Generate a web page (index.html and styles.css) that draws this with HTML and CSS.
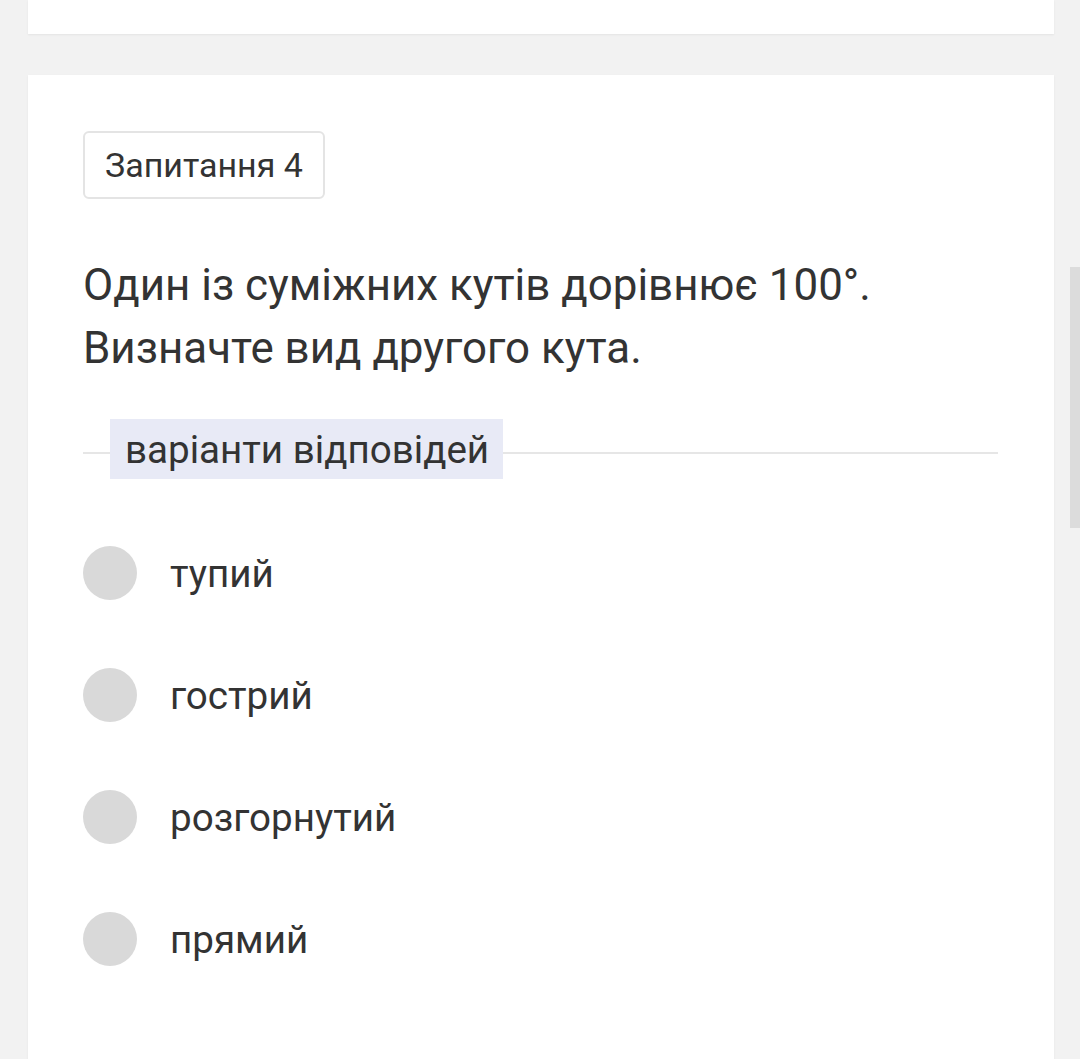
FILE: index.html
```html
<!DOCTYPE html>
<html lang="uk">
<head>
<meta charset="utf-8">
<link rel="stylesheet" href="styles.css">
</head>
<body>
<div class="page">
  <div class="card card-prev"></div>
  <div class="card card-question">
    <div class="badge">Запитання 4</div>
    <div class="question">Один із суміжних кутів дорівнює 100°.<br>Визначте вид другого кута.</div>
    <div class="divider">
      <span class="divider-label">варіанти відповідей</span>
    </div>
    <ul class="options">
      <li class="option"><span class="radio"></span><span class="option-text">тупий</span></li>
      <li class="option"><span class="radio"></span><span class="option-text">гострий</span></li>
      <li class="option"><span class="radio"></span><span class="option-text">розгорнутий</span></li>
      <li class="option"><span class="radio"></span><span class="option-text">прямий</span></li>
    </ul>
  </div>
</div>
<div class="scrollbar"></div>
</body>
</html>
```

FILE: styles.css
```css
html, body {
  margin: 0;
  padding: 0;
  background: #f2f2f2;
  font-family: Roboto, "Noto Sans", sans-serif;
  color: #333333;
  overflow: hidden;
}
.page {
  display: flex;
  flex-direction: column;
  gap: 41px;
  padding: 0 26px 0 28px;
  height: 1059px;
}
.card {
  background: #ffffff;
  box-shadow: 0 1px 2px rgba(0,0,0,0.06);
}
.card-prev {
  height: 34px;
  flex: none;
}
.card-question {
  flex: 1;
  padding: 56px 56px 0 55px;
}
.badge {
  display: inline-flex;
  align-items: center;
  box-sizing: border-box;
  height: 68px;
  padding: 0 20px 0 20px;
  border: 2px solid #e4e4e4;
  border-radius: 6px;
  font-size: 34px;
  color: #333333;
}
.question {
  margin-top: 55px;
  font-size: 43.9px;
  line-height: 63px;
  color: #333333;
}
.divider {
  position: relative;
  margin-top: 39px;
  height: 60px;
  display: flex;
  align-items: center;
}
.divider::before {
  content: "";
  position: absolute;
  left: 0;
  right: 0;
  top: 33px;
  height: 1.5px;
  background: #e6e6e6;
}
.divider-label {
  position: relative;
  margin-left: 27px;
  height: 60px;
  display: flex;
  align-items: center;
  padding: 0 14px 0 15px;
  background: #e8eaf6;
  font-size: 38.6px;
  color: #333333;
}
.options {
  list-style: none;
  margin: 67px 0 0 0;
  padding: 0;
  display: flex;
  flex-direction: column;
  gap: 68px;
}
.option {
  display: flex;
  align-items: center;
  gap: 33px;
  height: 54px;
}
.radio {
  width: 54px;
  height: 54px;
  border-radius: 50%;
  background: #d9d9d9;
  flex: none;
}
.option-text {
  font-size: 38.6px;
  color: #333333;
}
.scrollbar {
  position: fixed;
  right: 0;
  top: 267px;
  width: 10px;
  height: 261px;
  background: #dcdcdc;
}
```
